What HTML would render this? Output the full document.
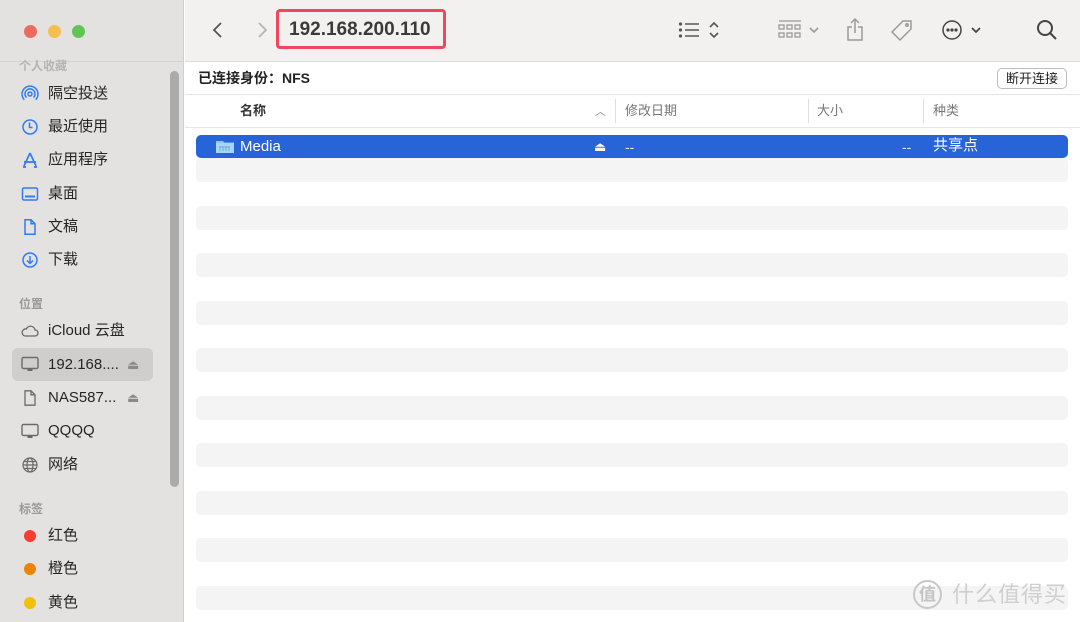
<!DOCTYPE html>
<html><head><meta charset="utf-8"><style>
*{margin:0;padding:0;box-sizing:border-box}
html,body{width:1080px;height:622px;overflow:hidden}
body{background:#fff;font-family:"Liberation Sans","Noto Sans CJK SC",sans-serif;position:relative}
.abs{position:absolute;white-space:nowrap;line-height:20px}
#side{left:0;top:0;width:184px;height:622px;background:#e3e2e1;border-right:1px solid #d0cfce}
#tool{left:185px;top:0;width:895px;height:62px;background:#f2f1f0;border-bottom:1px solid #dcdbda}
.dot{width:13px;height:13px;border-radius:50%;top:25px}
.sec{left:19px;font-size:12px;color:#9a9998;font-weight:bold}
.it{left:48px;font-size:15px;color:#262626}
.ic{left:21px;width:18px;height:18px}
.row{left:196px;width:872px;height:24px;background:#f4f4f4;border-radius:5px}
.hd{font-size:13px;color:#777;top:101px}
.sep{top:99px;width:1px;height:24px;background:#dedede}
.tag{left:24px;width:12px;height:12px;border-radius:50%}
</style></head><body>
<div id="side" class="abs"></div>
<div class="abs" style="left:0;top:61px;width:184px;height:1px;background:#d4d3d2"></div>
<div class="abs dot" style="left:24px;background:#ed6a5e"></div>
<div class="abs dot" style="left:48px;background:#f5bf4f"></div>
<div class="abs dot" style="left:72px;background:#61c554"></div>
<div class="abs" style="left:170px;top:71px;width:9px;height:416px;border-radius:5px;background:#ababab"></div>

<div class="abs sec" style="top:56px;color:#b5b4b3">个人收藏</div>
<svg class="abs ic" style="top:85px" viewBox="0 0 18 18" fill="none" stroke="#2f7cf6" stroke-width="1.5"><circle cx="9" cy="9" r="2"/><path d="M5.5 12.5a5 5 0 1 1 7 0M3.3 14.7a8 8 0 1 1 11.4 0"/></svg>
<div class="abs it" style="top:84px">隔空投送</div>
<svg class="abs ic" style="top:118px" viewBox="0 0 18 18" fill="none" stroke="#2f7cf6" stroke-width="1.5"><circle cx="9" cy="9" r="7"/><path d="M8.5 4.5v5h3"/></svg>
<div class="abs it" style="top:117px">最近使用</div>
<svg class="abs ic" style="top:151px" viewBox="0 0 18 18" fill="none" stroke="#2f7cf6" stroke-width="1.7"><path d="M9 2l-6 13M9 2l6 13M3 11h12M2 16h3M13 16h3"/></svg>
<div class="abs it" style="top:150px">应用程序</div>
<svg class="abs ic" style="top:185px" viewBox="0 0 18 18" fill="none" stroke="#2f7cf6" stroke-width="1.5"><rect x="1.5" y="3" width="15" height="12" rx="1.5"/><path d="M4 11.5h10" stroke-width="2"/></svg>
<div class="abs it" style="top:184px">桌面</div>
<svg class="abs ic" style="top:218px" viewBox="0 0 18 18" fill="none" stroke="#2f7cf6" stroke-width="1.5"><path d="M4 1.8h6l4 4v10.4H4zM10 1.8v4h4"/></svg>
<div class="abs it" style="top:217px">文稿</div>
<svg class="abs ic" style="top:251px" viewBox="0 0 18 18" fill="none" stroke="#2f7cf6" stroke-width="1.5"><circle cx="9" cy="9" r="7"/><path d="M9 5v7M6 9.5l3 3 3-3"/></svg>
<div class="abs it" style="top:250px">下载</div>

<div class="abs sec" style="top:294px">位置</div>
<svg class="abs ic" style="top:322px;width:20px;left:20px" viewBox="0 0 20 18" fill="none" stroke="#6a6a6a" stroke-width="1.3"><path d="M5 14h10a3 3 0 0 0 0-6 4.5 4.5 0 0 0-8.6-1A3.5 3.5 0 0 0 5 14z"/></svg>
<div class="abs it" style="top:321px">iCloud 云盘</div>
<div class="abs" style="left:12px;top:348px;width:141px;height:33px;border-radius:6px;background:#cfcecd"></div>
<svg class="abs ic" style="top:355px" viewBox="0 0 18 18" fill="#6a6a6a"><rect x="1" y="2.5" width="16" height="11" rx="1.5" fill="none" stroke="#6a6a6a" stroke-width="1.4"/><rect x="6.5" y="14" width="5" height="2"/></svg>
<div class="abs it" style="top:355px">192.168....</div>
<div class="abs" style="left:127px;top:355px;font-size:13px;color:#8b8a89">⏏</div>
<svg class="abs ic" style="top:389px" viewBox="0 0 18 18" fill="none" stroke="#6a6a6a" stroke-width="1.3"><path d="M4 1.8h6l4 4v10.4H4zM10 1.8v4h4"/></svg>
<div class="abs it" style="top:388px">NAS587...</div>
<div class="abs" style="left:127px;top:388px;font-size:13px;color:#8b8a89">⏏</div>
<svg class="abs ic" style="top:422px" viewBox="0 0 18 18" fill="#6a6a6a"><rect x="1" y="2.5" width="16" height="11" rx="1.5" fill="none" stroke="#6a6a6a" stroke-width="1.4"/><rect x="6.5" y="14" width="5" height="2"/></svg>
<div class="abs it" style="top:421px">QQQQ</div>
<svg class="abs ic" style="top:456px" viewBox="0 0 18 18" fill="none" stroke="#6a6a6a" stroke-width="1.2"><circle cx="9" cy="9" r="7"/><ellipse cx="9" cy="9" rx="3" ry="7"/><path d="M2 9h14M3 5.5h12M3 12.5h12"/></svg>
<div class="abs it" style="top:455px">网络</div>

<div class="abs sec" style="top:499px">标签</div>
<div class="abs tag" style="top:530px;background:#f63d30"></div><div class="abs it" style="top:526px">红色</div>
<div class="abs tag" style="top:563px;background:#ed8207"></div><div class="abs it" style="top:559px">橙色</div>
<div class="abs tag" style="top:597px;background:#f2c00b"></div><div class="abs it" style="top:593px">黄色</div>

<div id="tool" class="abs"></div>
<svg class="abs" style="left:208px;top:20px" width="20" height="20" viewBox="0 0 20 20" fill="none" stroke="#555" stroke-width="1.8"><path d="M13 3l-7 7 7 7"/></svg>
<svg class="abs" style="left:252px;top:20px" width="20" height="20" viewBox="0 0 20 20" fill="none" stroke="#b5b5b5" stroke-width="1.8"><path d="M7 3l7 7-7 7"/></svg>
<div class="abs" style="left:276px;top:9px;width:170px;height:40px;border:3px solid #f0465e;border-radius:4px"></div>
<div class="abs" style="left:289px;top:19px;font-size:19px;line-height:22px;font-weight:bold;color:#3a3a3a">192.168.200.110</div>
<svg class="abs" style="left:678px;top:20px" width="46" height="20" viewBox="0 0 46 20" fill="none" stroke="#555" stroke-width="1.6"><path d="M7 4h14M7 10h14M7 16h14"/><circle cx="2.5" cy="4" r=".8" fill="#555"/><circle cx="2.5" cy="10" r=".8" fill="#555"/><circle cx="2.5" cy="16" r=".8" fill="#555"/><path d="M32 7l4-4 4 4M32 13l4 4 4-4"/></svg>
<svg class="abs" style="left:778px;top:20px" width="44" height="20" viewBox="0 0 44 20" fill="none" stroke="#9a9a9a" stroke-width="1.3"><path d="M1 1h22"/><rect x="1" y="5" width="5" height="4"/><rect x="9" y="5" width="5" height="4"/><rect x="17" y="5" width="5" height="4"/><rect x="1" y="13" width="5" height="4"/><rect x="9" y="13" width="5" height="4"/><rect x="17" y="13" width="5" height="4"/><path d="M32 8l4 4 4-4" stroke-width="1.6"/></svg>
<svg class="abs" style="left:845px;top:17px" width="20" height="26" viewBox="0 0 20 26" fill="none" stroke="#9a9a9a" stroke-width="1.5"><path d="M10 2v14M6 6l4-4 4 4M7 10H3v13h14V10h-4"/></svg>
<svg class="abs" style="left:889px;top:18px" width="26" height="26" viewBox="0 0 26 26" fill="none" stroke="#9a9a9a" stroke-width="1.5"><path d="M14 3h8v8L11 22 3 14z"/><circle cx="18" cy="7" r="1.2"/></svg>
<svg class="abs" style="left:942px;top:19px" width="42" height="22" viewBox="0 0 42 22" fill="none" stroke="#444" stroke-width="1.5"><circle cx="10" cy="11" r="9"/><circle cx="6" cy="11" r=".9" fill="#444"/><circle cx="10" cy="11" r=".9" fill="#444"/><circle cx="14" cy="11" r=".9" fill="#444"/><path d="M30 9l4 4 4-4" stroke-width="1.8"/></svg>
<svg class="abs" style="left:1036px;top:19px" width="22" height="22" viewBox="0 0 22 22" fill="none" stroke="#444" stroke-width="2"><circle cx="9" cy="9" r="7"/><path d="M14 14l6 6"/></svg>

<div class="abs" style="left:198px;top:68px;font-size:14px;font-weight:bold;color:#222">已连接身份：NFS</div>
<div class="abs" style="left:997px;top:68px;width:70px;height:21px;border:1px solid #bdbdbd;border-radius:5px;background:#fff;font-size:13px;color:#222;text-align:center;line-height:19px">断开连接</div>
<div class="abs" style="left:185px;top:94px;width:895px;height:1px;background:#e4e4e4"></div>
<div class="abs hd" style="left:240px;color:#333;font-weight:bold">名称</div>
<div class="abs" style="left:595px;top:102px;font-size:11px;color:#888">︿</div>
<div class="abs sep" style="left:615px"></div>
<div class="abs hd" style="left:625px">修改日期</div>
<div class="abs sep" style="left:808px"></div>
<div class="abs hd" style="left:817px">大小</div>
<div class="abs sep" style="left:923px"></div>
<div class="abs hd" style="left:933px">种类</div>
<div class="abs" style="left:185px;top:127px;width:895px;height:1px;background:#e8e8e8"></div>

<div class="abs" style="left:196px;top:135px;width:872px;height:23px;background:#2764d8;border-radius:5px"></div>
<svg class="abs" style="left:215px;top:138px" width="20" height="17" viewBox="0 0 20 17"><path d="M1 3h7l1.5 1.5H19V15H1z" fill="#8cc4f0"/><path d="M1 5h18v10H1z" fill="#a9d4f5"/><path d="M5 8v5M8 8v5M11 8v5M14 8v5M4 9h11" stroke="#6eaee0" stroke-width="1"/></svg>
<div class="abs" style="left:240px;top:137px;font-size:15px;color:#fff">Media</div>
<div class="abs" style="left:594px;top:137px;font-size:13px;color:#fff">⏏</div>
<div class="abs" style="left:625px;top:137px;font-size:14px;color:#dfe8fa">--</div>
<div class="abs" style="left:902px;top:137px;font-size:14px;color:#dfe8fa">--</div>
<div class="abs" style="left:933px;top:136px;font-size:15px;color:#fff">共享点</div>

<div class="abs row" style="top:158px"></div>
<div class="abs row" style="top:206px"></div>
<div class="abs row" style="top:253px"></div>
<div class="abs row" style="top:301px"></div>
<div class="abs row" style="top:348px"></div>
<div class="abs row" style="top:396px"></div>
<div class="abs row" style="top:443px"></div>
<div class="abs row" style="top:491px"></div>
<div class="abs row" style="top:538px"></div>
<div class="abs row" style="top:586px"></div>

<div class="abs" style="left:913px;top:580px;width:29px;height:29px;border-radius:50%;border:2px solid #c8c8c8;font-size:17px;color:#c4c4c4;text-align:center;line-height:25px;font-weight:bold">值</div>
<div class="abs" style="left:952px;top:581px;font-size:22px;line-height:28px;color:#cfcfcf;letter-spacing:1px">什么值得买</div>
</body></html>
